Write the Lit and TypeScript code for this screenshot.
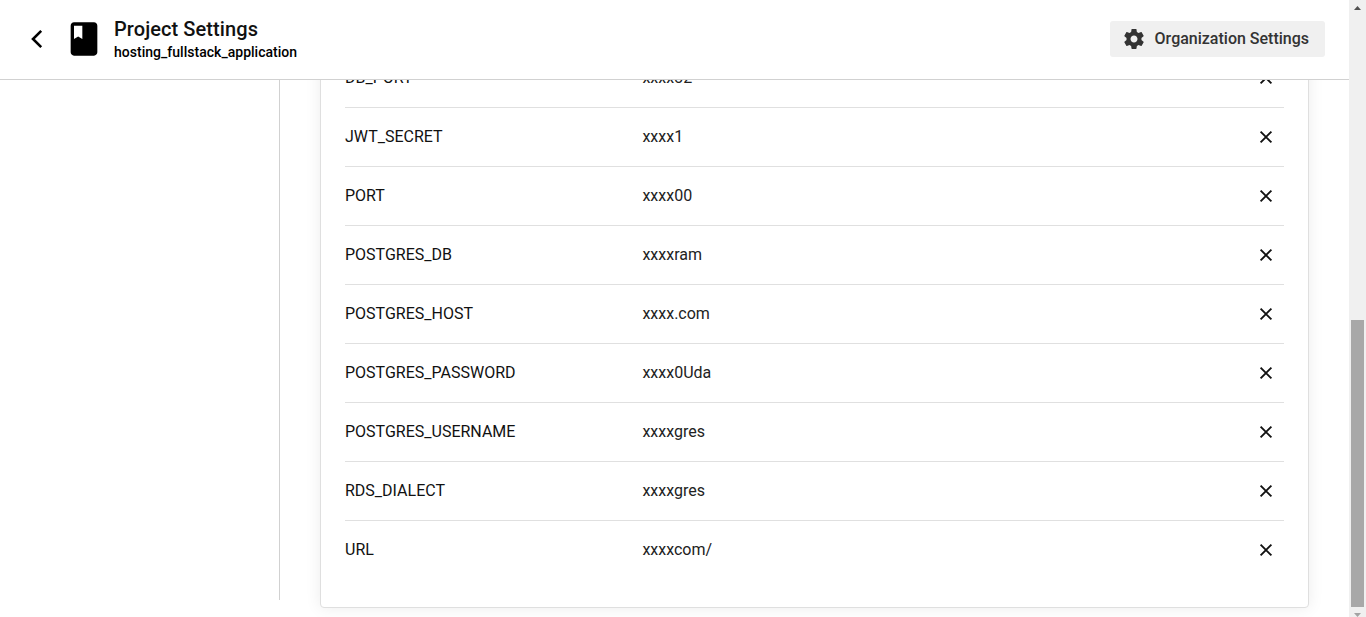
import { LitElement, html, css } from "lit";
import { customElement } from "lit/decorators.js";

const VARIABLES: [string, string][] = [
  ["DB_PORT", "xxxx32"],
  ["JWT_SECRET", "xxxx1"],
  ["PORT", "xxxx00"],
  ["POSTGRES_DB", "xxxxram"],
  ["POSTGRES_HOST", "xxxx.com"],
  ["POSTGRES_PASSWORD", "xxxx0Uda"],
  ["POSTGRES_USERNAME", "xxxxgres"],
  ["RDS_DIALECT", "xxxxgres"],
  ["URL", "xxxxcom/"],
];

@customElement("app-root")
export class AppRoot extends LitElement {
  static styles = css`
    :host {
      display: flex;
      height: 617px;
      overflow: hidden;
      background: #fff;
      color: #111;
      font-family: Roboto, sans-serif;
    }
    * { box-sizing: border-box; }
    svg { display: block; flex: none; }
    .page {
      flex: 1;
      min-width: 0;
      display: flex;
      flex-direction: column;
    }
    .header {
      flex: none;
      height: 80px;
      border-bottom: 1px solid #d1d1d1;
      display: flex;
      align-items: center;
      padding: 0 24px 2px 25px;
    }
    .book { margin: 0 0 0 15px; }
    .titles { margin-left: 10px; flex: 1; padding-top: 1px; }
    .title { font-size: 20px; line-height: 24px; font-weight: 500; color: #111; letter-spacing: 0.08px; }
    .subtitle { font-size: 14px; line-height: 20px; font-weight: 500; color: #000; padding-top: 1px; letter-spacing: 0.02px; }
    .org {
      height: 36px;
      width: 215px;
      display: flex;
      align-items: center;
      gap: 8.6px;
      padding: 0 0 0 12px;
      border: 0;
      border-radius: 3px;
      background: #f0f0f0;
      color: #333;
      font: 500 16px/24px Roboto, sans-serif;
      white-space: nowrap;
    }
    .body {
      flex: 1;
      min-height: 0;
      overflow: hidden;
      display: flex;
    }
    .side {
      width: 280px;
      height: 520px;
      flex: none;
      border-right: 1px solid #d1d1d1;
    }
    .main {
      flex: 1;
      display: flex;
      flex-direction: column;
      justify-content: flex-end;
      padding: 0 40px 9px;
    }
    .card {
      flex: none;
      border: 1px solid #dfdfdf;
      border-radius: 4px;
      box-shadow: 0 0 16px rgba(0, 0, 0, 0.08);
      padding: 24px 24px 28px;
      background: #fff;
    }
    .row {
      height: 59px;
      display: grid;
      grid-template-columns: 297.4px 1fr 20px;
      align-items: center;
      padding-right: 8px;
      border-bottom: 1px solid #e0e0e0;
      font-size: 16px;
      line-height: 24px;
      font-weight: 400;
    }
    .row:last-child { height: 58px; border-bottom: 0; }
    .value { color: #222; }
    .scrollbar {
      flex: none;
      width: 17px;
      background: #f0f0f0;
      display: flex;
      flex-direction: column;
      align-items: center;
    }
    .track { flex: 1; width: 13px; display: flex; align-items: flex-end; }
    .thumb { width: 13px; height: 287px; background: #a8a8a8; }
  `;

  render() {
    return html`
      <div class="page">
        <header class="header">
          <svg width="24" height="24" viewBox="0 0 24 24" fill="none" stroke="#000" stroke-width="2.6">
            <path d="M16.2 3.9 8 12l8.200 8.100" />
          </svg>
          <svg class="book" width="40" height="40" viewBox="0 0 24 24">
            <path d="M18 2H6c-1.100 0-2 .9-2 2v16c0 1.100.9 2 2 2h12c1.100 0 2-.9 2-2V4c0-1.100-.9-2-2-2zM6 4h5v8l-2.500-1.500L6 12V4z" />
          </svg>
          <div class="titles">
            <div class="title">Project Settings</div>
            <div class="subtitle">hosting_fullstack_application</div>
          </div>
          <button class="org">
            <svg width="24" height="24" viewBox="0 0 24 24" fill="#333">
              <path d="M19.430 12.980c.04-.32.07-.64.07-.98s-.03-.66-.07-.98l2.110-1.650c.19-.15.24-.42.12-.64l-2-3.460c-.12-.22-.39-.3-.61-.22l-2.490 1c-.52-.4-1.080-.73-1.690-.98l-.38-2.650C14.460 2.180 14.250 2 14 2h-4c-.25 0-.46.18-.49.42l-.38 2.650c-.61.25-1.170.59-1.690.98l-2.490-1c-.23-.09-.49 0-.61.22l-2 3.460c-.13.22-.07.49.12.64l2.110 1.650c-.04.32-.07.65-.07.98s.03.66.07.98l-2.110 1.650c-.19.15-.24.42-.12.64l2 3.460c.12.22.39.3.61.22l2.490-1c.52.4 1.080.73 1.690.98l.38 2.650c.03.24.24.42.49.42h4c.25 0 .46-.18.49-.42l.38-2.650c.61-.25 1.170-.59 1.690-.98l2.490 1c.23.09.49 0 .61-.22l2-3.460c.12-.22.07-.49-.12-.64l-2.110-1.650zM12 15.500c-1.930 0-3.500-1.570-3.500-3.500s1.570-3.500 3.500-3.500 3.500 1.570 3.500 3.500-1.570 3.500-3.500 3.500z" />
            </svg>
            Organization Settings
          </button>
        </header>
        <div class="body">
          <aside class="side"></aside>
          <main class="main">
            <section class="card">
              ${VARIABLES.map(
                ([key, value]) => html`
                  <div class="row">
                    <span>${key}</span>
                    <span class="value">${value}</span>
                    <svg width="20" height="20" viewBox="0 0 20 20" fill="none" stroke="#111" stroke-width="1.9">
                      <path d="M4.600 4.600 15.400 15.400M15.400 4.600 4.600 15.400" />
                    </svg>
                  </div>
                `
              )}
            </section>
          </main>
        </div>
      </div>
      <div class="scrollbar">
        <svg width="17" height="17" viewBox="0 0 17 17" fill="#505050"><path d="M5 10 8.500 6 12 10z" /></svg>
        <div class="track"><div class="thumb"></div></div>
        <svg width="17" height="10" viewBox="0 0 17 10" fill="#a3a3a3"><path d="M5 6h7L8.500 10z" /></svg>
      </div>
    `;
  }
}
